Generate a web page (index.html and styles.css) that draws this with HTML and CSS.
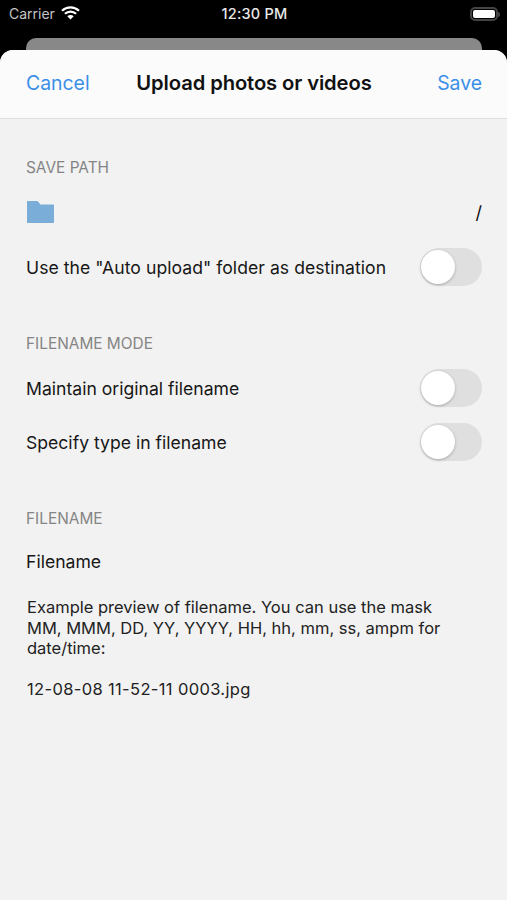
FILE: index.html
```html
<!DOCTYPE html>
<html lang="en">
<head>
<meta charset="utf-8">
<title>Upload photos or videos</title>
<link rel="stylesheet" href="styles.css">
</head>
<body>
<div class="screen">
  <div class="status">
    <div class="status-left">
      <span>Carrier</span>
      <svg class="wifi" width="19" height="14" viewBox="0 0 19 14"><path fill="none" stroke="#fff" stroke-width="2.2" d="M1 4.800C6 .2 13 .2 18 4.800M3.900 7.800c3.300-3 8-3 11.200 0"/><path fill="#fff" d="M9.500 13.600 6.300 10.200c1.800-1.500 4.600-1.500 6.400 0z"/></svg>
    </div>
    <div class="status-time">12:30 PM</div>
    <div class="status-right">
      <div class="battery"><div class="battery-fill"></div></div>
      <div class="battery-cap"></div>
    </div>
  </div>
  <div class="peek"></div>
  <div class="sheet">
    <header class="nav">
      <span class="nav-btn">Cancel</span>
      <span class="nav-title">Upload photos or videos</span>
      <span class="nav-btn nav-btn-end">Save</span>
    </header>
    <main class="content">
      <section class="section section-path">
        <h2 class="section-label">SAVE PATH</h2>
        <div class="path-row">
          <svg class="folder" width="29" height="24" viewBox="0 0 29 24"><path fill="#7aaed8" d="M1 2C1 1.400 1.400 1 2 1h9c.4 0 .7.2 1 .5l2.500 2.900H27.400c.4 0 .6.3.6.6v17.300c0 .4-.3.700-.6.700H1.700c-.4 0-.7-.3-.7-.7z"/></svg>
          <span class="path-value">/</span>
        </div>
        <div class="row row-auto">
          <span class="row-label">Use the "Auto upload" folder as destination</span>
          <span class="toggle"></span>
        </div>
      </section>
      <section class="section section-mode">
        <h2 class="section-label">FILENAME MODE</h2>
        <div class="row row-mode"><span class="row-label">Maintain original filename</span><span class="toggle"></span></div>
        <div class="row row-type"><span class="row-label">Specify type in filename</span><span class="toggle"></span></div>
      </section>
      <section class="section section-name">
        <h2 class="section-label">FILENAME</h2>
        <div class="filename">Filename</div>
        <p class="help">Example preview of filename. You can use the mask MM, MMM, DD, YY, YYYY, HH, hh, mm, ss, ampm for date/time:</p>
        <p class="example">12-08-08 11-52-11 0003.jpg</p>
      </section>
    </main>
  </div>
</div>
</body>
</html>
```
FILE: styles.css
```css
* { box-sizing: border-box; }
html, body { margin: 0; padding: 0; height: 100%; }
body { background: #000; font-family: Inter, "Liberation Sans", sans-serif; color: #111; overflow: hidden; }
.screen { height: 900px; display: flex; flex-direction: column; }

.status { height: 38px; flex: none; display: grid; grid-template-columns: 1fr auto 1fr; align-items: start; padding: 5px 7px 0 9px; color: #ddd; font-size: 14px; line-height: 18px; }
.status-left { display: flex; align-items: center; gap: 6px; color: #c4c4c4; }
.wifi { display: block; margin-top: -3px; }
.status-time { color: #e8e8e8; font-size: 14.5px; font-weight: 500; letter-spacing: 0.2px; }
.status-right { display: flex; justify-content: flex-end; align-items: center; height: 18px; }
.battery { width: 28px; height: 14px; border: 2px solid #444; border-radius: 5px; padding: 1px; }
.battery-fill { width: 100%; height: 100%; background: #fff; border-radius: 2px; }
.battery-cap { width: 2px; height: 5px; background: #444; border-radius: 0 2px 2px 0; }

.peek { height: 12px; flex: none; margin: 0 25px 0 26px; background: #888; border-radius: 10px 10px 0 0; }

.sheet { flex: 1; background: #f2f2f2; border-radius: 13px 13px 0 0; overflow: hidden; }
.nav { height: 69px; display: grid; grid-template-columns: 1fr auto 1fr; align-items: center; padding: 0 25px 2px 26px; background: #fbfbfb; border-bottom: 1px solid #dfdfdf; }
.nav-btn { color: #3a8fe8; font-size: 19.4px; line-height: 24px; }
.nav-btn-end { text-align: right; }
.nav-title { color: #111; font-size: 20.2px; font-weight: 600; line-height: 24px; letter-spacing: -0.1px; }

.content { padding: 0 25px 0 26px; }
.section-label { margin: 0; font-size: 15.4px; line-height: 18px; font-weight: 400; color: #858585; }
.section-path { padding-top: 40px; }
.path-row { height: 34px; margin-top: 18px; display: flex; justify-content: space-between; align-items: center; }
.folder { display: block; }
.path-value { font-size: 18px; color: #111; }
.row { display: flex; justify-content: space-between; align-items: center; font-size: 17.6px; line-height: 22px; height: 38px; color: #171717; }
.row-label { padding-top: 2px; }
.row-auto { margin-top: 19px; letter-spacing: 0.04px; }
.toggle { position: relative; width: 62px; height: 38px; flex: none; border-radius: 19px; background: #dfdfdf; }
.toggle::after { content: ""; position: absolute; left: 1px; top: 2px; width: 34px; height: 34px; border-radius: 50%; background: #fff; box-shadow: 0 1px 3px rgba(0,0,0,.25); }

.section-mode { padding-top: 49px; }
.row-mode { margin-top: 16px; }
.row-type { margin-top: 16px; }

.section-name { padding-top: 49px; }
.filename { margin-top: 23px; font-size: 17.6px; line-height: 22px; color: #171717; }
.help { margin: 24px 20px 0 1px; font-size: 16.5px; line-height: 20.5px; color: #222; }
.example { margin: 19px 0 0 1px; font-size: 16.5px; line-height: 22px; color: #222; letter-spacing: 0.35px; }
```
